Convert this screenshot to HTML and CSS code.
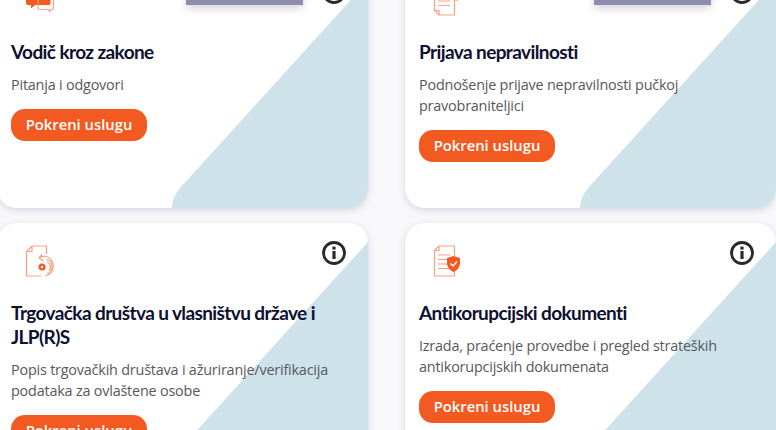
FILE: index.html
```html
<!DOCTYPE html>
<html lang="en">
<head>
    <meta charset="UTF-8">
    <meta name="viewport" content="width=device-width, initial-scale=1.0">
    <title>Usluge</title>
    <link rel="stylesheet" href="styles.css">
</head>
<body>
    <div class="card-grid">

        <div class="service-card">
            <svg class="card-bg" viewBox="0 0 371 246"><path d="M371 19 L183 226 Q175 236 175 246 L371 246 Z"/></svg>
            <div class="tip-box"></div>
            <svg class="info-icon" viewBox="0 0 24 24"><circle cx="12" cy="12" r="10.5"/><rect x="10.4" y="10" width="3.2" height="8"/><rect x="10.4" y="5.6" width="3.2" height="3"/></svg>
            <svg class="card-icon" viewBox="0 0 30 32">
                <path class="fill" d="M1 3 Q1 1 3 1 L24 1 Q25.500 1 25.500 3 L25.500 19 Q25.500 21 24 21 L10 21 L6 24.500 L6 21 L3 21 Q1 21 1 19 Z"/>
                <path class="line" d="M13 15 L27 15 Q28.500 15 28.500 17 L28.500 24 Q28.500 25.500 27 25.500 L25.500 25.500 L24.500 27.500 L23 25.500 L15 25.500 Q13 25.500 13 24 Z"/>
            </svg>
            <h3>Vodič kroz zakone</h3>
            <p>Pitanja i odgovori</p>
            <a class="start-btn" href="#">Pokreni uslugu</a>
        </div>

        <div class="service-card">
            <svg class="card-bg" viewBox="0 0 371 246"><path d="M371 19 L183 226 Q175 236 175 246 L371 246 Z"/></svg>
            <div class="tip-box"></div>
            <svg class="info-icon" viewBox="0 0 24 24"><circle cx="12" cy="12" r="10.5"/><rect x="10.4" y="10" width="3.2" height="8"/><rect x="10.4" y="5.6" width="3.2" height="3"/></svg>
            <svg class="card-icon" viewBox="0 0 30 32">
                <path class="line" d="M1.500 1 L21.500 1 L21.500 31 L6 31 L1.500 26.500 Z M1.500 26.500 L6 26.500 L6 31"/>
                <path class="line" d="M5 8 L17 8 M5 12.500 L17 12.500 M5 17 L17 17 M5 21.500 L17 21.500"/>
                <circle class="fill" cx="23.500" cy="11" r="5.500"/>
            </svg>
            <h3>Prijava nepravilnosti</h3>
            <p>Podnošenje prijave nepravilnosti pučkoj pravobraniteljici</p>
            <a class="start-btn" href="#">Pokreni uslugu</a>
        </div>

        <div class="service-card">
            <svg class="card-bg" viewBox="0 0 371 246"><path d="M371 19 L183 226 Q175 236 175 246 L371 246 Z"/></svg>
            <svg class="info-icon" viewBox="0 0 24 24"><circle cx="12" cy="12" r="10.5"/><rect x="10.4" y="10" width="3.2" height="8"/><rect x="10.4" y="5.6" width="3.2" height="3"/></svg>
            <svg class="card-icon" viewBox="0 0 30 32">
                <path class="line" d="M21.500 9 L21.500 1 L7 1 L1.500 6.500 L1.500 31 L16 31 M7 1 L7 6.500 L1.500 6.500"/>
                <path class="line" d="M14 13 Q18 10.500 21 11.500 A10 10 0 0 1 20 31 M14 13 L18 16 M14 13 L17 9.500"/>
                <path class="line" d="M21 14.500 A7.500 7.500 0 0 1 22 29"/>
                <path class="line" d="M22 17 A5.500 5.500 0 0 1 24 26"/>
                <circle class="gear" cx="17" cy="22" r="2.400"/>
            </svg>
            <h3>Trgovačka društva u vlasništvu države i JLP(R)S</h3>
            <p>Popis trgovačkih društava i ažuriranje/verifikacija podataka za ovlaštene osobe</p>
            <a class="start-btn" href="#">Pokreni uslugu</a>
        </div>

        <div class="service-card">
            <svg class="card-bg" viewBox="0 0 371 246"><path d="M371 19 L183 226 Q175 236 175 246 L371 246 Z"/></svg>
            <svg class="info-icon" viewBox="0 0 24 24"><circle cx="12" cy="12" r="10.5"/><rect x="10.4" y="10" width="3.2" height="8"/><rect x="10.4" y="5.6" width="3.2" height="3"/></svg>
            <svg class="card-icon" viewBox="0 0 30 32">
                <path class="line" d="M21.500 11 L21.500 1 L6 1 L1.500 5.500 L1.500 31 L21.500 31 L21.500 25 M6 1 L6 5.500 L1.500 5.500"/>
                <path class="line" d="M5 10 L17 10 M5 14.500 L14 14.500 M5 19 L14 19 M5 23.500 L17 23.500"/>
                <path class="fill" d="M20.500 11 L27 13 L27 19 Q26.500 24 20.500 27 Q14.500 24 14 19 L14 13 Z"/>
                <path class="tick" d="M17.500 18.500 L20 21 L24 16.500"/>
            </svg>
            <h3>Antikorupcijski dokumenti</h3>
            <p>Izrada, praćenje provedbe i pregled strateških antikorupcijskih dokumenata</p>
            <a class="start-btn" href="#">Pokreni uslugu</a>
        </div>

    </div>
</body>
</html>
```

FILE: styles.css
```css
/* General Reset */
* {
    margin: 0;
    padding: 0;
    box-sizing: border-box;
}

body {
    font-family: "Open Sans", Arial, sans-serif;
    background-color: #f8f8fa;
    overflow: hidden;
}

/* Two columns, page is scrolled a bit */
.card-grid {
    display: grid;
    grid-template-columns: 371px 371px;
    grid-auto-rows: 246px;
    column-gap: 37px;
    row-gap: 15px;
    margin: -38px 0 0 -3px;
}

/* Card */
.service-card {
    position: relative;
    display: flex;
    flex-direction: column;
    align-items: flex-start;
    padding: 22px 14px 0;
    background-color: #ffffff;
    border-radius: 20px;
    overflow: hidden;
    box-shadow: 0 2px 7px rgba(70, 70, 140, 0.2);
}

.service-card > * {
    position: relative;
}

.service-card > .card-bg {
    position: absolute;
    left: 0;
    top: 0;
    width: 371px;
    height: 246px;
    fill: #cde2e9;
}

/* Icons */
.card-icon {
    width: 30px;
    height: 32px;
    margin-left: 14px;
    fill: none;
}

.card-icon .line {
    fill: none;
    stroke: #f9a083;
    stroke-width: 1.2;
}

.card-icon .fill {
    fill: #f35a21;
}

.card-icon .gear {
    fill: none;
    stroke: #f35a21;
    stroke-width: 2.4;
}

.card-icon .tick {
    fill: none;
    stroke: #ffffff;
    stroke-width: 1.4;
}

.service-card > .info-icon {
    position: absolute;
    top: 18px;
    right: 22px;
    width: 24px;
    height: 24px;
    fill: #2b2a29;
}

.info-icon circle {
    fill: none;
    stroke: #2b2a29;
    stroke-width: 2.8;
}

/* Hidden tooltip edge at the top of the first row */
.service-card > .tip-box {
    position: absolute;
    top: 0;
    left: 189px;
    width: 117px;
    height: 43px;
    background-color: #8f8dae;
    box-shadow: 0 3px 8px rgba(70, 70, 110, 0.25);
}

/* Text */
h3 {
    margin-top: 24px;
    font-family: Lato, sans-serif;
    font-size: 19px;
    font-weight: 700;
    letter-spacing: -0.6px;
    line-height: 24px;
    color: #0d1030;
}

p {
    margin-top: 10px;
    font-size: 14.4px;
    letter-spacing: -0.2px;
    line-height: 21px;
    color: #57585c;
}

.start-btn {
    margin-top: 14px;
    width: 136px;
    height: 32px;
    border-radius: 14px;
    background-color: #f35a21;
    color: #ffffff;
    font-size: 14.8px;
    font-weight: 600;
    line-height: 31px;
    text-align: center;
    text-decoration: none;
}
```
